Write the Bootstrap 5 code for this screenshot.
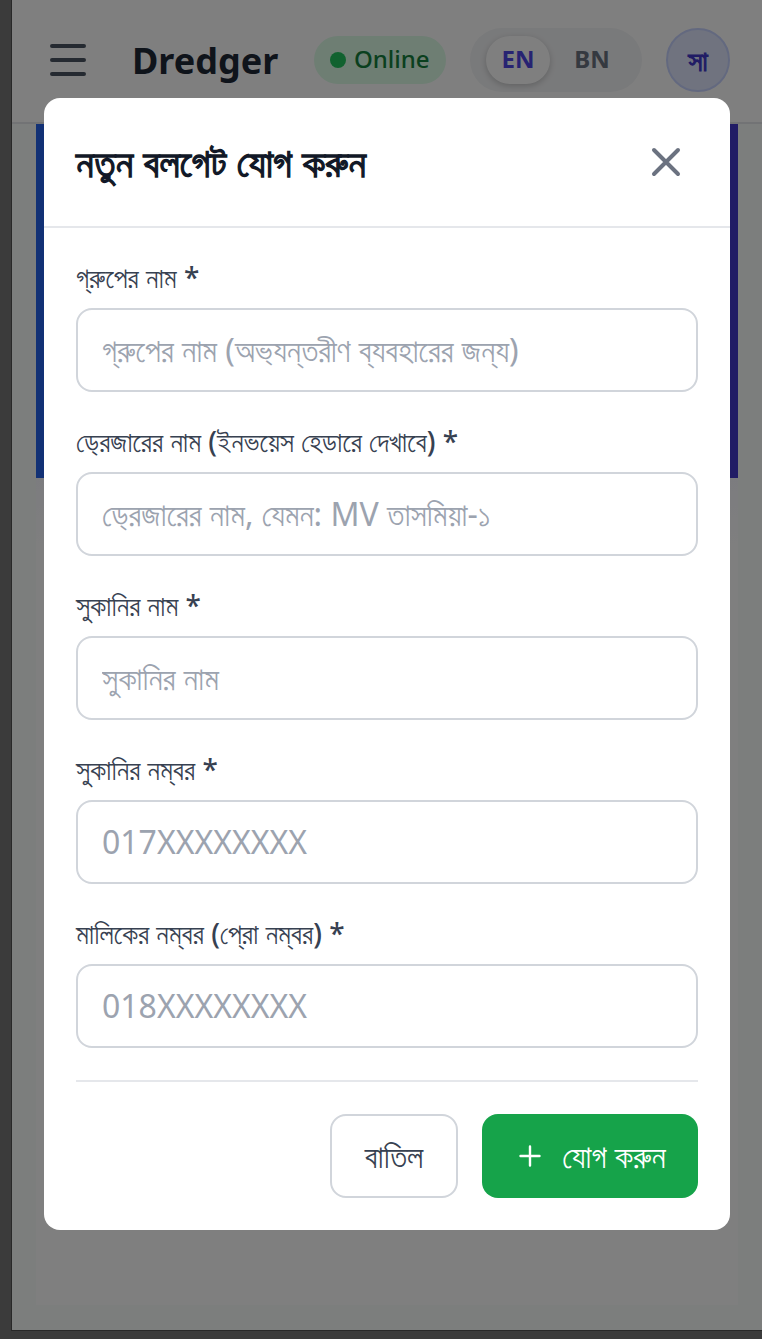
<!DOCTYPE html>
<html lang="en">
<head>
<meta charset="utf-8">
<meta name="viewport" content="width=device-width, initial-scale=1">
<title>Dredger</title>
<link href="https://cdn.jsdelivr.net/npm/bootstrap@5.3.0/dist/css/bootstrap.min.css" rel="stylesheet">
<style>
  body { font-family: "Noto Sans", FreeSans, sans-serif; background: #777; color: #111827; height: 1339px; overflow: hidden; }
  .app-frame { height: 1339px; padding: 0 0 8px 11px; }
  .app-page { height: 1331px; background: #f8fcfa; border-left: 1px solid #505050; border-bottom: 1px solid #505050; }
  .topbar { height: 124px; background: #fff; border-bottom: 2px solid #e5e7eb; padding: 0 32px 2px 32px; }
  .menu-btn { width: 48px; height: 48px; color: #4b5563; }
  .brand { font-size: 36px; line-height: 40px; font-weight: 700; color: #1f2937; margin-left: 40px; width: 182px; padding-top: 2px; }
  .status-pill { width: 132px; height: 48px; background: #dcfce7; color: #15803d; font-size: 24px; line-height: 32px; font-weight: 500; padding: 0 0 2px 16px; gap: 8px; }
  .status-dot { width: 16px; height: 16px; background: #22c55e; margin-top: 2px; }
  .lang-switch { width: 172px; height: 64px; background: #f3f4f6; padding: 8px 16px; margin-left: 24px; font-size: 24px; line-height: 32px; font-weight: 700; color: #6b7280; }
  .lang-opt { width: 64px; height: 48px; padding-bottom: 2px; }
  .lang-on { background: #fff; color: #4f46e5; box-shadow: 0 2px 6px rgba(0,0,0,.2); }
  .lang-off { margin-left: 10px; }
  .user-chip { width: 64px; height: 64px; background: #e0e7ff; border: 2px solid #c7d2fe; color: #4338ca; font-size: 28px; line-height: 40px; font-weight: 400; -webkit-text-stroke: 1.1px currentColor; margin-left: 24px; }
  .hero-panel { height: 354px; margin: 0 24px; background: linear-gradient(90deg, #2563eb, #4338ca); }
  .content-panel { height: 827px; margin: 0 24px; background: linear-gradient(#f9f9ff, #fff 80px); }
  .scrim { inset: 0; background: rgba(0,0,0,.5); padding: 98px 32px 109px 44px; }
  .dialog-box { height: 1132px; border-radius: 16px; font-feature-settings: "blwf" 0, "vatu" 0, "rkrf" 0, "half" 0, "cjct" 0, "pstf" 0; }
  .dialog-head { height: 130px; border-bottom: 2px solid #e5e7eb; padding: 0 44px 0 32px; }
  .dialog-title { font-size: 40px; line-height: 56px; font-weight: 400; -webkit-text-stroke: 1.3px currentColor; color: #111827; }
  .close-btn { width: 40px; height: 40px; color: #6b7280; }
  .dialog-form { padding: 32px; }
  .field { margin-bottom: 32px; }
  .field-label { font-size: 28px; line-height: 34px; height: 40px; margin-bottom: 8px; font-weight: 500; color: #374151; white-space: nowrap; }
  .field-input { height: 84px; border: 2px solid #d1d5db; border-radius: 16px; padding: 15px 24px 17px; font-size: 32px; line-height: 48px; font-feature-settings: inherit; }
  .field-input::placeholder { color: #9ca3af; }
  .dialog-actions { border-top: 2px solid #e5e7eb; padding-top: 32px; gap: 24px; }
  .action-btn { height: 84px; border-radius: 16px; font-size: 32px; line-height: 48px; white-space: nowrap; }
  .cancel-btn, .cancel-btn:hover { width: 128px; border: 2px solid #d1d5db; color: #374151; background: #fff; }
  .add-btn, .add-btn:hover { width: 216px; background: #16a34a; color: #fff; border: 0; }
</style>
</head>
<body>
<div class="app-frame">
  <div class="app-page">
    <header class="topbar d-flex align-items-center">
      <button class="btn menu-btn border-0 p-0 flex-shrink-0" aria-label="Menu"><svg class="d-block" width="48" height="48" viewBox="0 0 24 24" fill="none" stroke="currentColor" stroke-width="2" stroke-linecap="round"><path d="M4 5h16M4 12h16M4 19h16"/></svg></button>
      <div class="brand flex-shrink-0">Dredger</div>
      <div class="status-pill rounded-pill d-flex align-items-center flex-shrink-0"><span class="status-dot rounded-circle"></span>Online</div>
      <div class="lang-switch rounded-pill d-flex align-items-center flex-shrink-0">
        <span class="lang-opt lang-on rounded-pill d-flex align-items-center justify-content-center">EN</span>
        <span class="lang-opt lang-off d-flex align-items-center justify-content-center">BN</span>
      </div>
      <div class="user-chip rounded-circle d-flex align-items-center justify-content-center flex-shrink-0">সা</div>
    </header>
    <div class="hero-panel"></div>
    <div class="content-panel"></div>
  </div>
</div>
<div class="scrim position-absolute">
  <div class="dialog-box bg-white" role="dialog" aria-modal="true">
    <div class="dialog-head d-flex align-items-center justify-content-between">
      <h2 class="dialog-title m-0">নতুন বলগেট যোগ করুন</h2>
      <button class="btn close-btn border-0 p-0" aria-label="Close"><svg class="d-block" width="40" height="40" viewBox="0 0 40 40" fill="none" stroke="currentColor" stroke-width="4" stroke-linecap="round"><path d="M8 8l24 24M32 8L8 32"/></svg></button>
    </div>
    <form class="dialog-form">
      <div class="field"><label class="field-label d-block" for="f1">গ্রুপের নাম *</label><input id="f1" class="form-control field-input" placeholder="গ্রুপের নাম (অভ্যন্তরীণ ব্যবহারের জন্য)"></div>
      <div class="field"><label class="field-label d-block" for="f2">ড্&zwj;রেজারের নাম (ইনভয়েস হেডারে দেখাবে) *</label><input id="f2" class="form-control field-input" placeholder="ড্&zwj;রেজারের নাম, যেমন: MV তাসমিয়া-১"></div>
      <div class="field"><label class="field-label d-block" for="f3">সুকানির নাম *</label><input id="f3" class="form-control field-input" placeholder="সুকানির নাম"></div>
      <div class="field"><label class="field-label d-block" for="f4">সুকানির নম্বর *</label><input id="f4" class="form-control field-input" placeholder="017XXXXXXXX"></div>
      <div class="field"><label class="field-label d-block" for="f5">মালিকের নম্বর (প্&zwj;রো নম্বর) *</label><input id="f5" class="form-control field-input" placeholder="018XXXXXXXX"></div>
      <div class="dialog-actions d-flex justify-content-end">
        <button type="button" class="btn action-btn cancel-btn p-0">বাতিল</button>
        <button type="button" class="btn action-btn add-btn p-0 d-flex align-items-center justify-content-center gap-3"><svg width="32" height="32" viewBox="0 0 32 32" fill="none" stroke="currentColor" stroke-width="2.4" stroke-linecap="round"><path d="M16 6.500v19M6.500 16h19"/></svg><span>যোগ করুন</span></button>
      </div>
    </form>
  </div>
</div>
<script src="https://cdn.jsdelivr.net/npm/bootstrap@5.3.0/dist/js/bootstrap.bundle.min.js"></script>
</body>
</html>
